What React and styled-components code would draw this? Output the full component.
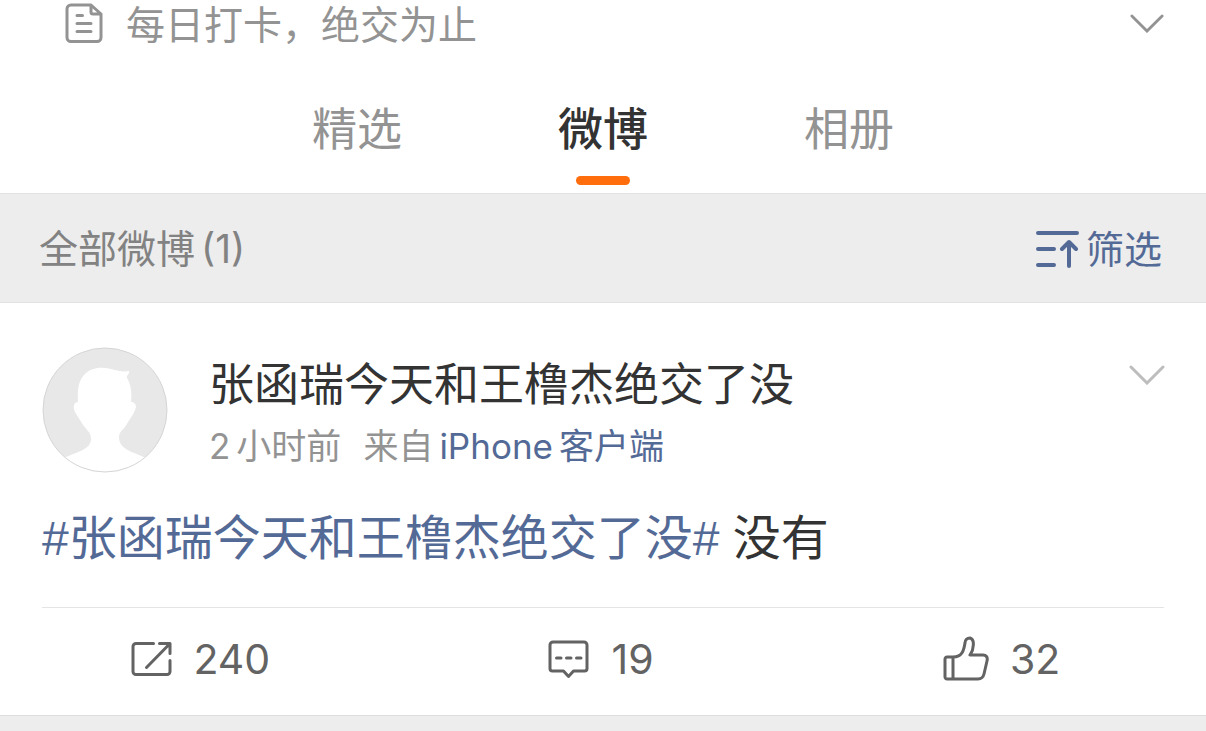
import React, { useState } from 'react';
import styled, { createGlobalStyle } from 'styled-components';

const GlobalStyle = createGlobalStyle`
    * {
        box-sizing: border-box;
    }

    body {
        margin: 0;
        background-color: #ededed;
        font-family: Inter, 'Noto Sans CJK SC', sans-serif;
        color: #333333;
    }

    button {
        margin: 0;
        padding: 0;
        border: 0;
        background: none;
        font-family: inherit;
        color: inherit;
        cursor: pointer;
    }

    svg {
        display: block;
        flex: none;
    }
`;

// 顶部资料区（简介 + 标签页）
const ProfileHeader = styled.header`
    background-color: #ffffff;
`;

const IntroRow = styled.div`
    display: flex;
    align-items: center;
    padding: 0 42px 0 64px;
`;

const IntroText = styled.p`
    flex: 1;
    margin: 0 0 0 22px;
    padding-top: 4px;
    font-size: 39px;
    line-height: 42px;
    color: #939393;
`;

const ArrowButton = styled.button`
    display: flex;
    color: #939393;
`;

const MoreButton = styled(ArrowButton)`
    padding-top: 18px;
    color: #bdbdbd;
`;

const TabList = styled.nav`
    display: flex;
    justify-content: center;
    gap: 156px;
    padding: 54px 0 8px;
`;

const Tab = styled.button`
    display: flex;
    flex-direction: column;
    align-items: center;
    gap: 16px;
    font-size: 45px;
    line-height: 60px;
    font-weight: ${({ $active }) => ($active ? 500 : 400)};
    color: ${({ $active }) => ($active ? '#333333' : '#939393')};

    &::after {
        content: '';
        width: 54px;
        height: 9px;
        border-radius: 5px;
        background-color: ${({ $active }) => ($active ? '#ff6d0d' : 'transparent')};
    }
`;

// 灰色筛选栏
const FilterBar = styled.div`
    display: flex;
    align-items: center;
    justify-content: space-between;
    padding: 28px 44px 26px 39px;
    border-top: 1px solid #e2e2e2;
    border-bottom: 1px solid #e2e2e2;
    line-height: 54px;
`;

const Total = styled.span`
    display: flex;
    gap: 6px;
    font-size: 39px;
    color: #828282;
`;

const FilterButton = styled.button`
    display: flex;
    align-items: center;
    gap: 6px;
    font-size: 38px;
    line-height: 54px;
    color: #546a96;
`;

// 单条微博
const Post = styled.article`
    background-color: #ffffff;
    border-bottom: 1px solid #dedede;
`;

const PostHeader = styled.div`
    display: flex;
    align-items: flex-start;
    padding: 44px 41px 0 42px;
`;

const Author = styled.div`
    flex: 1;
    display: flex;
    flex-direction: column;
    gap: 9px;
    padding: 8px 0 0 41px;
`;

const AuthorName = styled.h2`
    margin: 0;
    font-size: 45px;
    line-height: 60px;
    font-weight: 400;
`;

const Meta = styled.div`
    display: flex;
    gap: 22px;
    font-size: 35px;
    line-height: 44px;
    color: #939393;
`;

const MetaPart = styled.span`
    display: flex;
    gap: 6px;
`;

const Link = styled.a`
    color: #546a96;
    text-decoration: none;
`;

const SourceLink = styled(Link)`
    display: flex;
    gap: 6px;
`;

const PostText = styled.p`
    margin: 0;
    padding: 34px 42px 36px;
    font-family: 'Liberation Sans', 'Noto Sans CJK SC', sans-serif;
    font-size: 48px;
    line-height: 64px;
`;

const Actions = styled.div`
    display: flex;
    position: relative;
    padding-right: 4px;

    &::before {
        content: '';
        position: absolute;
        top: 0;
        left: 42px;
        right: 42px;
        height: 1px;
        background-color: #e4e4e4;
    }
`;

const ActionButton = styled.button`
    flex: 1;
    display: flex;
    align-items: center;
    justify-content: center;
    gap: 21px;
    padding: 26px 0 30px;
    font-size: 41px;
    line-height: 52px;
    color: #636363;
`;

const NoteIcon = () => (
    <svg width="40" height="42" viewBox="0 0 40 42" fill="none" stroke="#939393" strokeWidth="3" strokeLinecap="round" strokeLinejoin="round">
        <path d="M27 3H7a4 4 0 0 0-4 4v28.5a4 4 0 0 0 4 4h26a4 4 0 0 0 4-4V12L27 3v7a2 2 0 0 0 2 2h8" />
        <path d="M13 13.5h5.5M13 21.5h14M13 29.5h14" />
    </svg>
);

const ArrowDown = ({ width, height }) => (
    <svg width={width} height={height} viewBox="0 0 36 20" fill="none" stroke="currentColor" strokeWidth="3" strokeLinecap="round">
        <path d="M2 2l16 16L34 2" strokeLinejoin="miter" />
    </svg>
);

const SortIcon = () => (
    <svg width="44" height="38" viewBox="0 0 44 38" fill="none" stroke="currentColor" strokeWidth="4" strokeLinecap="round" strokeLinejoin="round">
        <path d="M2 3h39M2 19h16M2 35h16" />
        <path d="M33 36V12M26 19l7-7 7 7" />
    </svg>
);

const Avatar = () => (
    <svg width="126" height="126" viewBox="0 0 126 126" role="img" aria-label="头像">
        <defs>
            <clipPath id="avatar-circle">
                <circle cx="63" cy="63" r="62" />
            </clipPath>
        </defs>
        <circle cx="63" cy="63" r="62" fill="#e8e8e8" />
        <path
            clipPath="url(#avatar-circle)"
            fill="#ffffff"
            d="M22 111C34 105 49 103 49 92C49 84 44 84 38 73C34 67 31 63 32 59C32 56 34 55 36 55C35 41 37 32 44 26C51 20 61 20 69 22C76 24 82 25 87 24C88 27 84 28 85 31C89 37 90 46 89 55C92 55 94 57 94 60C93 65 90 69 86 75C82 83 77 84 77 90C77 103 92 105 104 111L104 126H22Z"
        />
        <circle cx="63" cy="63" r="62" fill="none" stroke="#d5d5d5" />
    </svg>
);

const RepostIcon = () => (
    <svg width="42" height="36" viewBox="0 0 42 36" fill="none" stroke="currentColor" strokeWidth="3" strokeLinecap="round" strokeLinejoin="round">
        <path d="M23.5 2.5H6a3 3 0 0 0-3 3v25a3 3 0 0 0 3 3h31a3 3 0 0 0 3-3V19.5" />
        <path d="M29.5 2.5H40V12.5M39.5 3L16.5 26.5" />
    </svg>
);

const CommentIcon = () => (
    <svg width="42" height="40" viewBox="0 0 42 40" fill="none" stroke="currentColor" strokeWidth="3" strokeLinecap="round" strokeLinejoin="round">
        <path d="M5 3h31a3 3 0 0 1 3 3v23.5a2.5 2.5 0 0 1-2.5 2.5H25.500l-5 5.5-5-5.5H4.5a2.5 2.5 0 0 1-2.5-2.5V6a3 3 0 0 1 3-3z" />
        <path d="M8.5 19h4.5M18.5 19h4.500M28.5 19h4.500" />
    </svg>
);

const LikeIcon = () => (
    <svg width="46" height="46" viewBox="0 0 46 46" fill="none" stroke="currentColor" strokeWidth="3" strokeLinecap="round" strokeLinejoin="round">
        <path d="M10 21C20 21 21 13 22 7C22 4 24 2 27 2C30 3 31 6 30 11C30 15 28 17 27 19H40C43 19 45 21 44 25L41 38C40 42 38 43 35 43H4C3 43 2 42 2 41V23C2 22 3 21 4 21H10V43" />
    </svg>
);

const tabs = ['精选', '微博', '相册'];

const App = () => {
    const [activeTab, setActiveTab] = useState('微博');

    return (
        <>
            <GlobalStyle />
            <ProfileHeader>
                <IntroRow>
                    <NoteIcon />
                    <IntroText>每日打卡，绝交为止</IntroText>
                    <ArrowButton aria-label="展开简介">
                        <ArrowDown width={34} height={19} />
                    </ArrowButton>
                </IntroRow>
                <TabList>
                    {tabs.map((tab) => (
                        <Tab key={tab} $active={tab === activeTab} onClick={() => setActiveTab(tab)}>
                            {tab}
                        </Tab>
                    ))}
                </TabList>
            </ProfileHeader>

            <FilterBar>
                <Total>
                    <span>全部微博</span>
                    <span>(1)</span>
                </Total>
                <FilterButton>
                    <SortIcon />
                    筛选
                </FilterButton>
            </FilterBar>

            <Post>
                <PostHeader>
                    <Avatar />
                    <Author>
                        <AuthorName>张函瑞今天和王橹杰绝交了没</AuthorName>
                        <Meta>
                            <MetaPart>
                                <span>2</span>
                                <span>小时前</span>
                            </MetaPart>
                            <MetaPart>
                                <span>来自</span>
                                <SourceLink href="#source">
                                    <span>iPhone</span>
                                    <span>客户端</span>
                                </SourceLink>
                            </MetaPart>
                        </Meta>
                    </Author>
                    <MoreButton aria-label="更多">
                        <ArrowDown width={36} height={20} />
                    </MoreButton>
                </PostHeader>
                <PostText>
                    <Link href="#topic">#张函瑞今天和王橹杰绝交了没#</Link> 没有
                </PostText>
                <Actions>
                    <ActionButton aria-label="转发 240">
                        <RepostIcon />
                        240
                    </ActionButton>
                    <ActionButton aria-label="评论 19">
                        <CommentIcon />
                        19
                    </ActionButton>
                    <ActionButton aria-label="赞 32">
                        <LikeIcon />
                        32
                    </ActionButton>
                </Actions>
            </Post>
        </>
    );
};

export default App;
